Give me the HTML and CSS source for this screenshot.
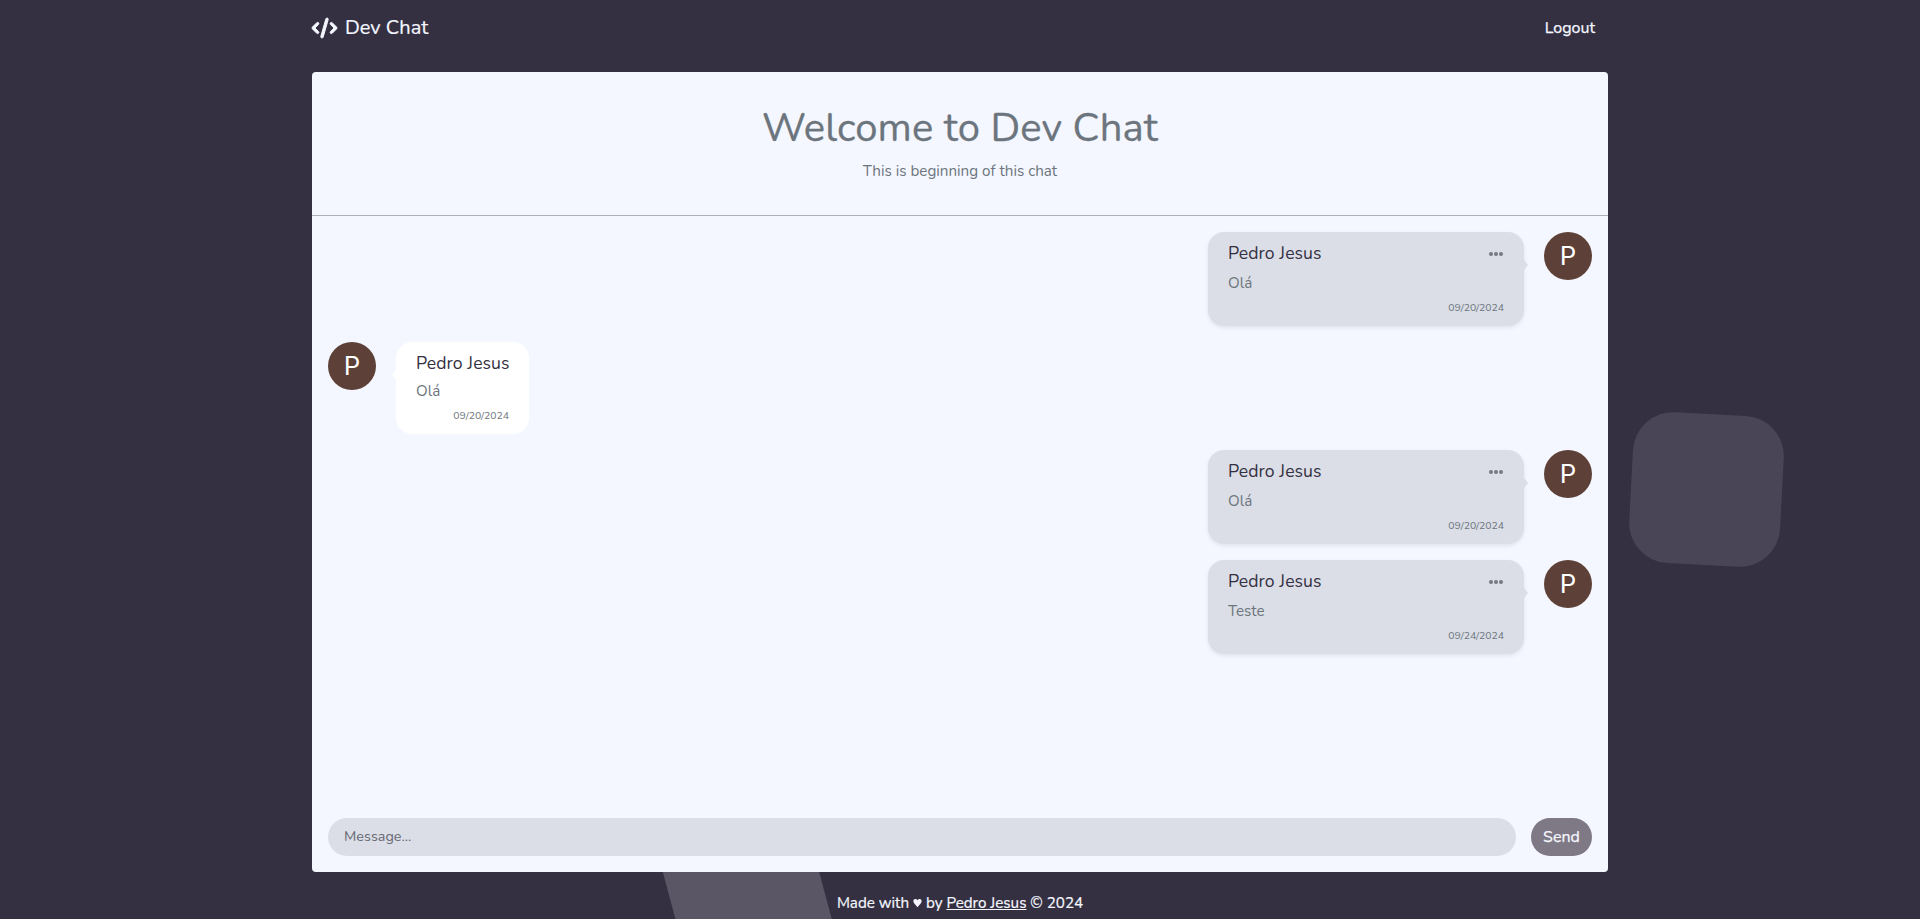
FILE: index.html
```html
<!DOCTYPE html>
<html lang="en">
<head>
<meta charset="utf-8">
<title>Dev Chat</title>
<link rel="stylesheet" href="styles.css">
</head>
<body>
<div class="backdrop">
  <div class="shape shape-right"></div>
  <div class="shape shape-bottom"></div>
</div>
<div class="page">
  <nav class="navbar">
    <a class="brand"><svg class="brand-icon" viewBox="0 0 640 512"><path d="M392.800 1.200c-17-4.900-34.700 5-39.600 22l-128 448c-4.900 17 5 34.700 22 39.600s34.700-5 39.600-22l128-448c4.900-17-5-34.700-22-39.600zm80.600 120.100c-12.500 12.500-12.500 32.800 0 45.300L562.700 256l-89.400 89.400c-12.500 12.500-12.500 32.800 0 45.300s32.800 12.500 45.300 0l112-112c12.500-12.500 12.500-32.800 0-45.300l-112-112c-12.500-12.500-32.800-12.500-45.300 0zm-306.700 0c-12.500-12.500-32.800-12.500-45.300 0l-112 112c-12.500 12.500-12.500 32.800 0 45.300l112 112c12.500 12.500 32.800 12.500 45.300 0s12.500-32.800 0-45.300L77.300 256l89.400-89.400c12.500-12.500 12.500-32.800 0-45.300z"/></svg><span class="brand-name">Dev Chat</span></a>
    <a class="logout">Logout</a>
  </nav>
  <main class="chat">
    <header class="chat-header">
      <h1 class="title">Welcome to Dev Chat</h1>
      <p class="subtitle">This is beginning of this chat</p>
    </header>
    <section class="messages">
      <article class="message mine">
        <div class="bubble">
          <div class="bubble-top"><span class="name">Pedro Jesus</span><svg class="dots" viewBox="0 0 14 4"><circle cx="2" cy="2" r="2"/><circle cx="7" cy="2" r="2"/><circle cx="12" cy="2" r="2"/></svg></div>
          <p class="text">Olá</p>
          <time class="date">09/20/2024</time>
        </div>
        <div class="avatar">P</div>
      </article>
      <article class="message theirs">
        <div class="avatar">P</div>
        <div class="bubble">
          <div class="bubble-top"><span class="name">Pedro Jesus</span></div>
          <p class="text">Olá</p>
          <time class="date">09/20/2024</time>
        </div>
      </article>
      <article class="message mine">
        <div class="bubble">
          <div class="bubble-top"><span class="name">Pedro Jesus</span><svg class="dots" viewBox="0 0 14 4"><circle cx="2" cy="2" r="2"/><circle cx="7" cy="2" r="2"/><circle cx="12" cy="2" r="2"/></svg></div>
          <p class="text">Olá</p>
          <time class="date">09/20/2024</time>
        </div>
        <div class="avatar">P</div>
      </article>
      <article class="message mine">
        <div class="bubble">
          <div class="bubble-top"><span class="name">Pedro Jesus</span><svg class="dots" viewBox="0 0 14 4"><circle cx="2" cy="2" r="2"/><circle cx="7" cy="2" r="2"/><circle cx="12" cy="2" r="2"/></svg></div>
          <p class="text">Teste</p>
          <time class="date">09/24/2024</time>
        </div>
        <div class="avatar">P</div>
      </article>
    </section>
    <form class="composer">
      <input class="field" type="text" placeholder="Message...">
      <button class="send" type="button">Send</button>
    </form>
  </main>
  <footer class="footer"><span>Made with <svg class="heart" viewBox="0 0 10 10"><path d="M5 9.600C3.500 7.300.4 5.600.4 3 .4 1.500 1.400.5 2.700.5 3.800.5 4.600 1.100 5 2.100 5.400 1.100 6.200.5 7.300.5 8.600.5 9.600 1.500 9.600 3 9.600 5.600 6.500 7.300 5 9.600z"/></svg> by <a class="author">Pedro Jesus</a> © 2024</span></footer>
</div>
</body>
</html>
```
FILE: styles.css
```css
* { box-sizing: border-box; }
body {
  margin: 0;
  height: 919px;
  position: relative;
  background: #343042;
  font-family: Nunito, Lato, "Open Sans", sans-serif;
  font-size: 15.2px;
  color: #6c757d;
}
h1, p { margin: 0; font-weight: 400; }
.backdrop { position: absolute; inset: 0; overflow: hidden; }
.shape { position: absolute; }
.shape-right {
  left: 1631px; top: 414px; width: 151px; height: 151px;
  border-radius: 40px; transform: rotate(3deg); background: #494556;
}
.shape-bottom {
  left: 673px; top: 795px; width: 151px; height: 210px;
  transform: rotate(-15deg); background: #5a5666;
}
.page {
  position: relative;
  width: 1296px; height: 919px;
  margin: 0 auto;
  display: flex; flex-direction: column;
}
.navbar {
  height: 72px; padding: 0 13px 17px 0;
  display: flex; align-items: center; justify-content: space-between;
  color: #f5f7ff;
}
.brand { display: flex; align-items: center; gap: 8px; }
.brand-icon { width: 25px; height: 20px; fill: #f5f7ff; stroke: #f5f7ff; stroke-width: 24; overflow: visible; }
.brand-name { font-size: 20px; -webkit-text-stroke: .2px; }
.logout { font-size: 16px; -webkit-text-stroke: .25px; }
.chat {
  height: 800px; border-radius: 4px; overflow: hidden;
  background: #f4f7ff;
  display: flex; flex-direction: column;
}
.chat-header {
  height: 144px; padding-top: 32px;
  border-bottom: 1px solid #adb0bb;
  text-align: center;
}
.title { font-size: 40px; line-height: 48px; letter-spacing: .12px; -webkit-text-stroke: .3px; }
.subtitle { line-height: 24px; margin-top: 7px; }
.messages { flex: 1; padding: 16px; display: flex; flex-direction: column; gap: 16px; }
.message { display: flex; align-items: flex-start; gap: 20px; }
.mine { justify-content: flex-end; }
.bubble {
  position: relative; height: 94px; width: 316px;
  padding: 8px 20px 0; border-radius: 16px;
  background: #dbdee6;
  box-shadow: 0 2px 4px rgba(0, 0, 0, .08);
  display: flex; flex-direction: column;
}
.bubble::after {
  content: ""; position: absolute; top: 28px; left: 100%;
  border: 5px solid transparent; border-left: 4px solid #dbdee6; border-right-width: 0;
}
.theirs .bubble { width: 133px; height: 92px; background: #fff; box-shadow: none; }
.theirs .bubble::after {
  left: auto; right: 100%;
  border: 5px solid transparent; border-right: 4px solid #fff; border-left-width: 0;
}
.bubble-top { height: 27px; display: flex; align-items: center; justify-content: space-between; }
.name { font-size: 17.6px; line-height: 27px; letter-spacing: .08px; color: #343042; white-space: nowrap; }
.dots { width: 14px; height: 4px; margin-right: 1px; fill: #777882; }
.text { line-height: 24px; margin-top: 4px; }
.date { font-size: 10.4px; line-height: 16px; margin-top: 5px; align-self: flex-end; }
.theirs .text { margin-top: 2px; }
.avatar {
  width: 48px; height: 48px; border-radius: 50%;
  background: #5d4037; color: #fff;
  font: 25px/49px Roboto, sans-serif; text-align: center;
}
.composer { height: 70px; padding: 16px; display: flex; gap: 15px; align-items: flex-start; }
.field, .send { height: 38px; border: 0; border-radius: 19px; font-family: inherit; }
.field { flex: 1; background: #dbdee6; padding: 0 16px 2px; font-size: 14.4px; color: #343042; }
.field::placeholder { color: #666873; }
.send { width: 61px; padding: 0 0 1px; background: #7f7885; color: #f5f7ff; font-size: 16px; -webkit-text-stroke: .25px; }
.footer {
  height: 47px; padding-top: 15px; color: #f5f7ff;
  font-size: 15.2px; line-height: 32px; text-align: center;
  -webkit-text-stroke: .2px;
}
.heart { width: 9px; height: 10px; fill: #f5f7ff; }
.author { text-decoration: underline; }
```
